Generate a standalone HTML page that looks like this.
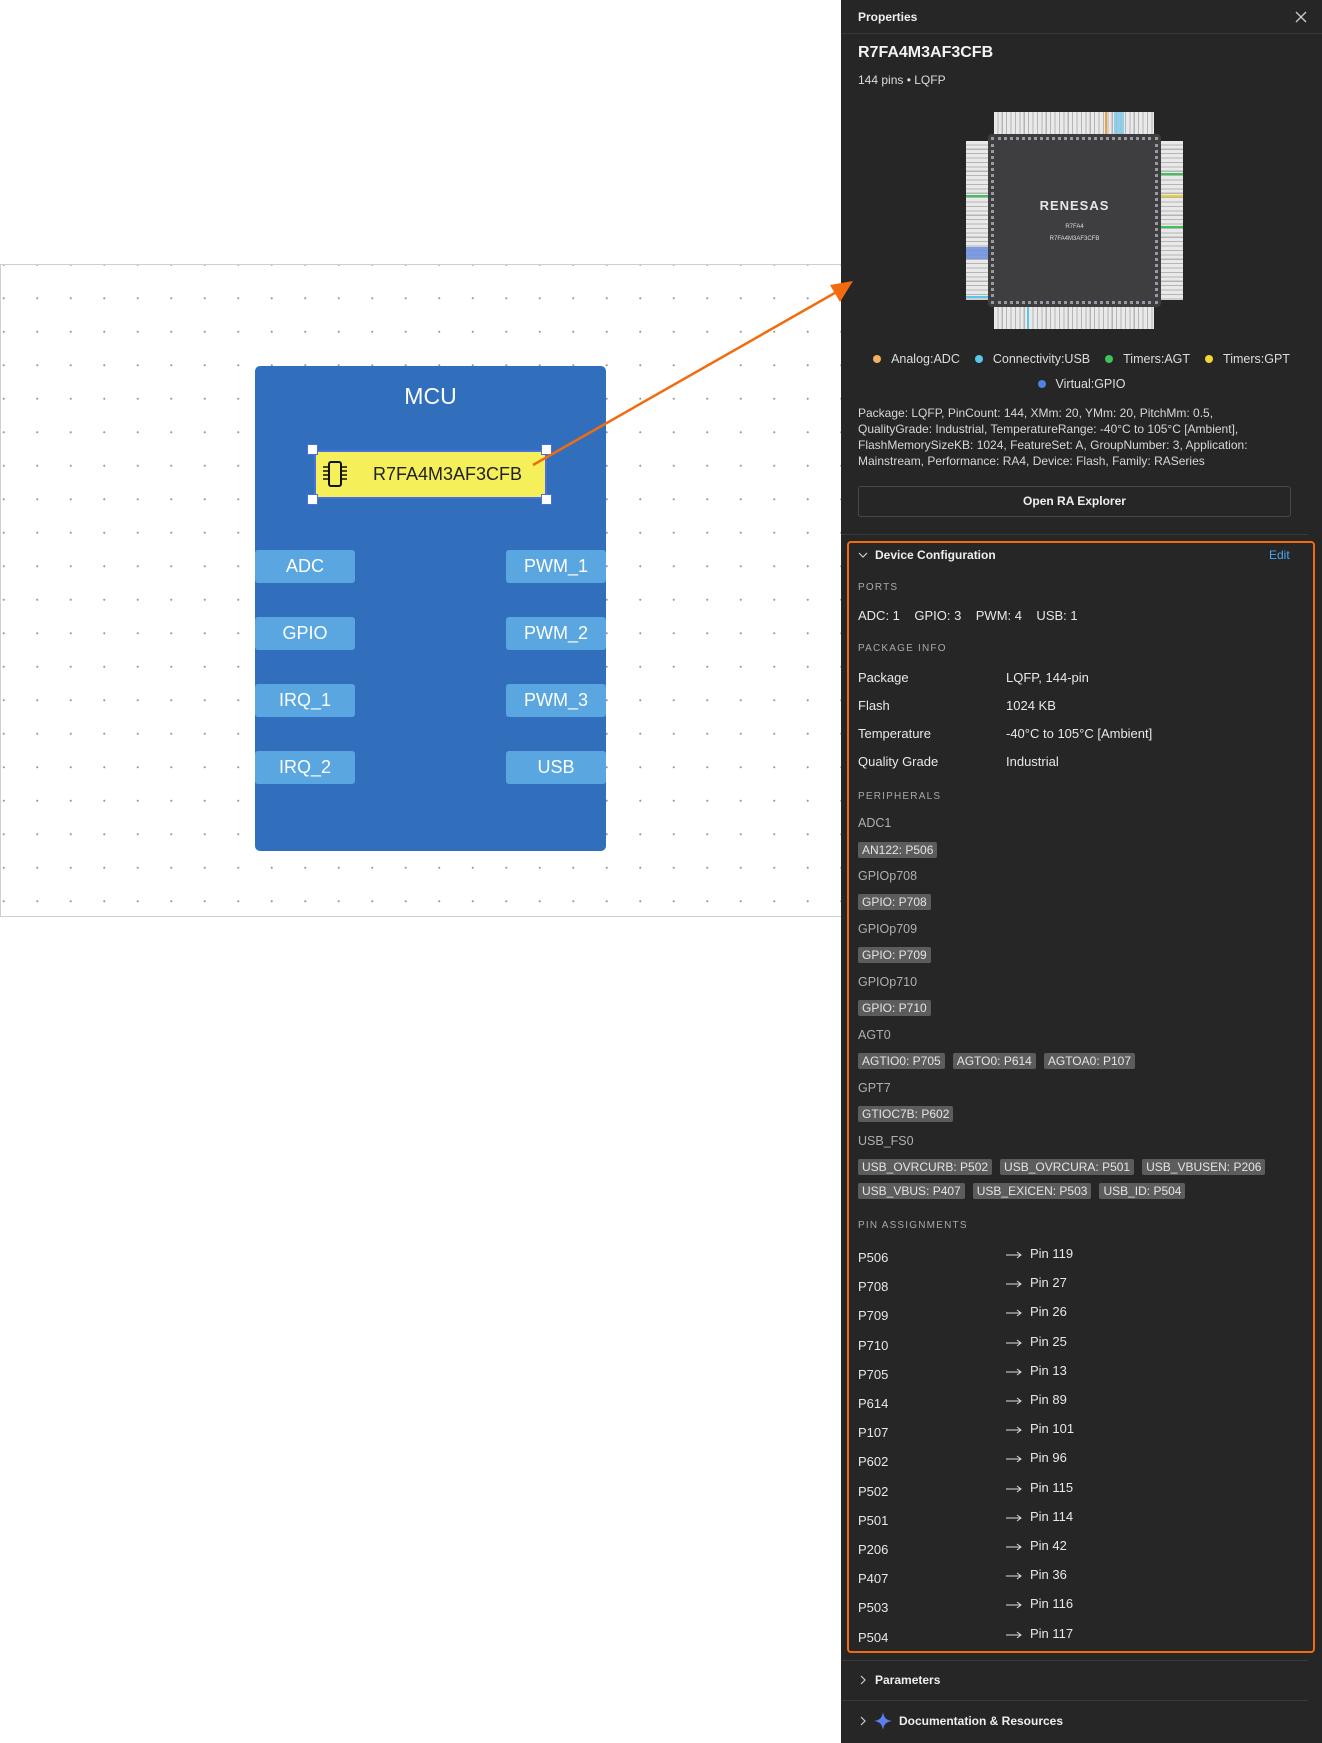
<!DOCTYPE html>
<html><head><meta charset="utf-8"><style>
*{margin:0;padding:0;box-sizing:border-box}
body{width:1322px;height:1743px;background:#fff;position:relative;overflow:hidden;font-family:"Liberation Sans",sans-serif}
.a{position:absolute;white-space:nowrap}
#canvas{position:absolute;left:0;top:264px;width:842px;height:653px;border:1px solid #cfcfcf;border-right:none;
background-image:radial-gradient(circle,#9a9a9a 0.9px,transparent 1.2px);background-size:33.5px 33.5px;background-position:-14px -17px}
.mcu{position:absolute;left:255px;top:366px;width:351px;height:485px;background:#316fbd;border-radius:5px}
.pin{position:absolute;width:100px;height:33px;background:#5aa6e0;color:#fff;font-size:18px;text-align:center;line-height:33px;border-radius:3px}
.h{position:absolute;width:11px;height:11px;background:#fff;border:1.5px solid #4a6fe0}
#panel{position:absolute;left:841px;top:0;width:481px;height:1743px;background:#262626;color:#e6e6e6}
.sec{font-size:10px;letter-spacing:1.2px;color:#a8a8a8}
.t{font-size:13px;color:#e8e8e8}
.g{font-size:12.5px;color:#b0b0b0}
.tag{display:inline-block;background:#5c5c5c;color:#e4e4e4;font-size:12px;height:16px;line-height:16px;padding:0 4px;border-radius:2px;margin-right:8px}
.dot{display:inline-block;width:8px;height:8px;border-radius:50%;margin:0 10px 0 15px;vertical-align:0}
</style></head><body>
<div id="canvas"></div>
<div class="mcu"></div>
<div class="a" style="left:255px;width:351px;top:383px;text-align:center;color:#fff;font-size:23px">MCU</div>
<div class="a" style="left:314px;top:450px;width:233px;height:49px;background:#f5ef5a;border:2px solid #4a6fe0"></div>
<svg class="a" style="left:321px;top:460px" width="28" height="28" viewBox="0 0 28 28"><rect x="8" y="2" width="12" height="24" rx="2" fill="none" stroke="#111" stroke-width="2"/><path d="M2 7h6M2 11h6M2 15h6M2 19h6M20 7h6M20 11h6M20 15h6M20 19h6" stroke="#111" stroke-width="1.6"/></svg>
<div class="a" style="left:373px;top:464px;font-size:18px;color:#222">R7FA4M3AF3CFB</div>
<div class="h" style="left:307px;top:444px"></div><div class="h" style="left:541px;top:444px"></div>
<div class="h" style="left:307px;top:494px"></div><div class="h" style="left:541px;top:494px"></div>
<div class="pin" style="left:255px;top:550px">ADC</div><div class="pin" style="left:506px;top:550px">PWM_1</div>
<div class="pin" style="left:255px;top:617px">GPIO</div><div class="pin" style="left:506px;top:617px">PWM_2</div>
<div class="pin" style="left:255px;top:684px">IRQ_1</div><div class="pin" style="left:506px;top:684px">PWM_3</div>
<div class="pin" style="left:255px;top:751px">IRQ_2</div><div class="pin" style="left:506px;top:751px">USB</div>

<div id="panel">
<div class="a" style="left:0;top:33px;width:481px;height:1px;background:#3a3a3a"></div>
<div class="a" style="left:17px;top:10px;font-size:12px;font-weight:bold;color:#eee">Properties</div>
<svg class="a" style="left:454px;top:11px" width="12" height="12"><path d="M1 1L11 11M11 1L1 11" stroke="#ccc" stroke-width="1.3"/></svg>
<div class="a" style="left:17px;top:44px;font-size:16px;font-weight:bold;color:#f2f2f2">R7FA4M3AF3CFB</div>
<div class="a" style="left:17px;top:73px;font-size:12px;color:#ddd">144 pins • LQFP</div>
<!-- chip -->
<div class="a" style="left:153px;top:112px;width:160px;height:22px;background:repeating-linear-gradient(90deg,#e9e9e9 0 3.3px,#b5b5b5 3.3px 4.4px)"></div>
<div class="a" style="left:153px;top:307px;width:160px;height:22px;background:repeating-linear-gradient(90deg,#e9e9e9 0 3.3px,#b5b5b5 3.3px 4.4px)"></div>
<div class="a" style="left:125px;top:141px;width:22px;height:159px;background:repeating-linear-gradient(180deg,#e9e9e9 0 3.3px,#b5b5b5 3.3px 4.4px)"></div>
<div class="a" style="left:320px;top:141px;width:22px;height:159px;background:repeating-linear-gradient(180deg,#e9e9e9 0 3.3px,#b5b5b5 3.3px 4.4px)"></div>
<div class="a" style="left:264px;top:112px;width:2px;height:22px;background:#f0a040"></div>
<div class="a" style="left:273px;top:112px;width:10px;height:22px;background:#7fc8e6;opacity:.8"></div>
<div class="a" style="left:186px;top:307px;width:2px;height:22px;background:#5bc6ea"></div>
<div class="a" style="left:125px;top:195px;width:22px;height:2px;background:#3cc45a"></div>
<div class="a" style="left:125px;top:247px;width:22px;height:12px;background:#6a8ee0;opacity:.85"></div>
<div class="a" style="left:125px;top:296px;width:22px;height:2px;background:#5bc6ea"></div>
<div class="a" style="left:320px;top:173px;width:22px;height:2px;background:#3cc45a"></div>
<div class="a" style="left:320px;top:195px;width:22px;height:2px;background:#e8d030"></div>
<div class="a" style="left:320px;top:226px;width:22px;height:2px;background:#3cc45a"></div>
<div class="a" style="left:147px;top:134px;width:173px;height:173px;background:#3e3e40;border-radius:4px"></div>
<div class="a" style="left:150px;top:137px;width:167px;height:167px;border:3px dotted #b0b0bc;opacity:.8"></div>
<div class="a" style="left:147px;top:198px;width:173px;text-align:center;font-size:13px;font-weight:bold;letter-spacing:1px;color:#e6e6e6">RENESAS</div>
<div class="a" style="left:147px;top:224px;width:173px;text-align:center;font-size:6px;color:#ddd">R7FA4</div>
<div class="a" style="left:147px;top:236px;width:173px;text-align:center;font-size:6px;color:#ddd">R7FA4M3AF3CFB</div>
<!-- legend -->
<div class="a" style="left:0;top:352px;width:481px;text-align:center;font-size:12.5px;color:#ddd"><span class="dot" style="background:#f4b062;margin-left:0"></span>Analog:ADC<span class="dot" style="background:#5bc6ea"></span>Connectivity:USB<span class="dot" style="background:#3cc45a"></span>Timers:AGT<span class="dot" style="background:#f0d830"></span>Timers:GPT</div>
<div class="a" style="left:0;top:377px;width:481px;text-align:center;font-size:12.5px;color:#ddd"><span class="dot" style="background:#5080e0;margin-left:0"></span>Virtual:GPIO</div>
<div class="a" style="left:17px;top:405px;font-size:12px;line-height:16px;color:#d8d8d8">Package: LQFP, PinCount: 144, XMm: 20, YMm: 20, PitchMm: 0.5,<br>QualityGrade: Industrial, TemperatureRange: -40°C to 105°C [Ambient],<br>FlashMemorySizeKB: 1024, FeatureSet: A, GroupNumber: 3, Application:<br>Mainstream, Performance: RA4, Device: Flash, Family: RASeries</div>
<div class="a" style="left:17px;top:486px;width:433px;height:31px;border:1px solid #484848;border-radius:3px;text-align:center;line-height:29px;font-size:12px;font-weight:bold;color:#eee">Open RA Explorer</div>
<div class="a" style="left:0;top:534px;width:467px;height:1px;background:#3a3a3a"></div>
<div class="a" style="left:6px;top:541px;width:468px;height:1112px;border:2px solid #f26b0f;border-radius:4px"></div>
<svg class="a" style="left:17px;top:551px" width="10" height="8"><path d="M1 2l4 4 4-4" stroke="#ccc" fill="none" stroke-width="1.2"/></svg>
<div class="a" style="left:34px;top:548px;font-size:12px;font-weight:bold;color:#eee">Device Configuration</div>
<div class="a" style="left:428px;top:548px;font-size:12px;color:#4aa8ee">Edit</div>
<div class="a sec" style="left:17px;top:582px">PORTS</div>
<div class="a t" style="left:17px;top:608px">ADC: 1&nbsp;&nbsp;&nbsp;&nbsp;GPIO: 3&nbsp;&nbsp;&nbsp;&nbsp;PWM: 4&nbsp;&nbsp;&nbsp;&nbsp;USB: 1</div>
<div class="a sec" style="left:17px;top:643px">PACKAGE INFO</div>
<div class="a t" style="left:17px;top:670px">Package</div><div class="a t" style="left:165px;top:670px">LQFP, 144-pin</div>
<div class="a t" style="left:17px;top:698px">Flash</div><div class="a t" style="left:165px;top:698px">1024 KB</div>
<div class="a t" style="left:17px;top:726px">Temperature</div><div class="a t" style="left:165px;top:726px">-40°C to 105°C [Ambient]</div>
<div class="a t" style="left:17px;top:754px">Quality Grade</div><div class="a t" style="left:165px;top:754px">Industrial</div>
<div class="a sec" style="left:17px;top:791px">PERIPHERALS</div>
<div class="a g" style="left:17px;top:816px">ADC1</div>
<div class="a" style="left:17px;top:841px"><span class="tag">AN122: P506</span></div>
<div class="a g" style="left:17px;top:869px">GPIOp708</div>
<div class="a" style="left:17px;top:893px"><span class="tag">GPIO: P708</span></div>
<div class="a g" style="left:17px;top:922px">GPIOp709</div>
<div class="a" style="left:17px;top:946px"><span class="tag">GPIO: P709</span></div>
<div class="a g" style="left:17px;top:975px">GPIOp710</div>
<div class="a" style="left:17px;top:999px"><span class="tag">GPIO: P710</span></div>
<div class="a g" style="left:17px;top:1028px">AGT0</div>
<div class="a" style="left:17px;top:1052px"><span class="tag">AGTIO0: P705</span><span class="tag">AGTO0: P614</span><span class="tag">AGTOA0: P107</span></div>
<div class="a g" style="left:17px;top:1081px">GPT7</div>
<div class="a" style="left:17px;top:1105px"><span class="tag">GTIOC7B: P602</span></div>
<div class="a g" style="left:17px;top:1134px">USB_FS0</div>
<div class="a" style="left:17px;top:1158px"><span class="tag">USB_OVRCURB: P502</span><span class="tag">USB_OVRCURA: P501</span><span class="tag">USB_VBUSEN: P206</span></div>
<div class="a" style="left:17px;top:1182px"><span class="tag">USB_VBUS: P407</span><span class="tag">USB_EXICEN: P503</span><span class="tag">USB_ID: P504</span></div>
<div class="a sec" style="left:17px;top:1220px">PIN ASSIGNMENTS</div>
<div id="pins"></div>
<div class="a" style="left:0;top:1660px;width:467px;height:1px;background:#3a3a3a"></div>
<svg class="a" style="left:18px;top:1675px" width="8" height="10"><path d="M2 1l4 4-4 4" stroke="#ccc" fill="none" stroke-width="1.2"/></svg>
<div class="a" style="left:34px;top:1673px;font-size:12px;font-weight:bold;color:#eee">Parameters</div>
<div class="a" style="left:0;top:1700px;width:467px;height:1px;background:#3a3a3a"></div>
<svg class="a" style="left:18px;top:1716px" width="8" height="10"><path d="M2 1l4 4-4 4" stroke="#ccc" fill="none" stroke-width="1.2"/></svg>
<svg class="a" style="left:33px;top:1712px" width="18" height="18" viewBox="0 0 18 18"><path d="M9 0C10 6 12 8 18 9C12 10 10 12 9 18C8 12 6 10 0 9C6 8 8 6 9 0Z" fill="#5a7ff0"/></svg>
<div class="a" style="left:58px;top:1714px;font-size:12px;font-weight:bold;color:#eee">Documentation &amp; Resources</div>
</div>
<script>
var p=[["P506",119],["P708",27],["P709",26],["P710",25],["P705",13],["P614",89],["P107",101],["P602",96],["P502",115],["P501",114],["P206",42],["P407",36],["P503",116],["P504",117]],h="";
p.forEach(function(r,i){var y=1250+i*29.2;h+='<div class="a t" style="left:17px;top:'+y+'px">'+r[0]+'</div><svg class="a" style="left:165px;top:'+(y+1)+'px" width="16" height="8"><path d="M0 4H15M11 1L15 4L11 7" stroke="#ddd" fill="none" stroke-width="1"/></svg><div class="a t" style="left:189px;top:'+(y-4)+'px">Pin '+r[1]+'</div>';});
document.getElementById("pins").outerHTML=h;
</script>
<svg class="a" style="left:0;top:0" width="1322" height="1743"><line x1="533" y1="465" x2="840" y2="290" stroke="#f26b0f" stroke-width="2.5"/><path d="M853 281L830 285L840 302Z" fill="#f26b0f"/></svg>
</body></html>
